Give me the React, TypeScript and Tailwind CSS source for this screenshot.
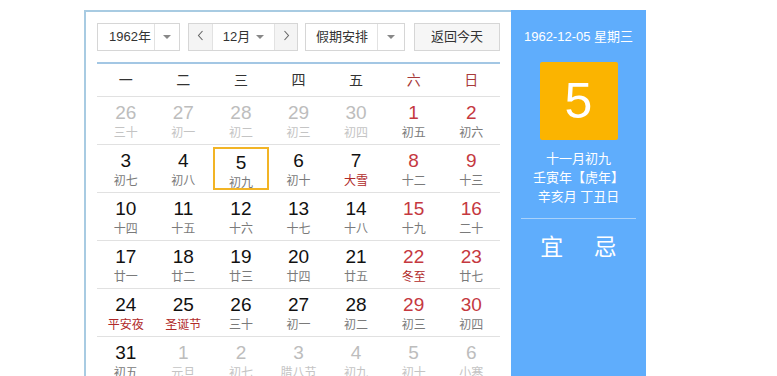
import React from 'react';

type Day = {
  d: number;
  lunar: string;
  other?: boolean;
  fest?: boolean;
};

const rows: Day[][] = [
  [
    { d: 26, lunar: '三十', other: true },
    { d: 27, lunar: '初一', other: true },
    { d: 28, lunar: '初二', other: true },
    { d: 29, lunar: '初三', other: true },
    { d: 30, lunar: '初四', other: true },
    { d: 1, lunar: '初五' },
    { d: 2, lunar: '初六' },
  ],
  [
    { d: 3, lunar: '初七' },
    { d: 4, lunar: '初八' },
    { d: 5, lunar: '初九' },
    { d: 6, lunar: '初十' },
    { d: 7, lunar: '大雪', fest: true },
    { d: 8, lunar: '十二' },
    { d: 9, lunar: '十三' },
  ],
  [
    { d: 10, lunar: '十四' },
    { d: 11, lunar: '十五' },
    { d: 12, lunar: '十六' },
    { d: 13, lunar: '十七' },
    { d: 14, lunar: '十八' },
    { d: 15, lunar: '十九' },
    { d: 16, lunar: '二十' },
  ],
  [
    { d: 17, lunar: '廿一' },
    { d: 18, lunar: '廿二' },
    { d: 19, lunar: '廿三' },
    { d: 20, lunar: '廿四' },
    { d: 21, lunar: '廿五' },
    { d: 22, lunar: '冬至', fest: true },
    { d: 23, lunar: '廿七' },
  ],
  [
    { d: 24, lunar: '平安夜', fest: true },
    { d: 25, lunar: '圣诞节', fest: true },
    { d: 26, lunar: '三十' },
    { d: 27, lunar: '初一' },
    { d: 28, lunar: '初二' },
    { d: 29, lunar: '初三' },
    { d: 30, lunar: '初四' },
  ],
  [
    { d: 31, lunar: '初五' },
    { d: 1, lunar: '元旦', other: true },
    { d: 2, lunar: '初七', other: true },
    { d: 3, lunar: '腊八节', other: true },
    { d: 4, lunar: '初九', other: true },
    { d: 5, lunar: '初十', other: true },
    { d: 6, lunar: '小寒', other: true },
  ],
];

const weekdays = ['一', '二', '三', '四', '五', '六', '日'];

const Caret = () => (
  <span className="w-0 h-0 border-l-[4px] border-r-[4px] border-t-[4px] border-l-transparent border-r-transparent border-t-[#888]" />
);

const Chevron: React.FC<{ dir: 'left' | 'right' }> = ({ dir }) => (
  <svg width="7" height="11" viewBox="0 0 7 11" className="mt-[-3px]">
    <path
      d={dir === 'left' ? 'M5.5 1 L1.5 5.5 L5.5 10' : 'M1.5 1 L5.5 5.5 L1.5 10'}
      fill="none"
      stroke="#666"
      strokeWidth="1.1"
    />
  </svg>
);

const DayCell: React.FC<{ day: Day; col: number; selected: boolean }> = ({ day, col, selected }) => {
  const weekend = col >= 5;
  let numColor = 'text-[#111]';
  let lunarColor = 'text-[#7a7a7a]';
  if (day.other) {
    numColor = 'text-[#bdbdbd]';
    lunarColor = 'text-[#c4c4c4]';
  } else if (weekend) {
    numColor = 'text-[#c5393f]';
  }
  if (day.fest && !day.other) lunarColor = 'text-[#b02a2a]';

  return (
    <div className="h-[48px] border-b border-[#e1e1e1] flex">
      <div
        className={
          'flex-1 flex flex-col items-center justify-start ' +
          (selected ? 'mx-[1px] my-[2px] border-[2.5px] border-[#f2b425] pt-[2.5px]' : 'pt-[5px]')
        }
      >
        <span className={'text-[19px] leading-[22px] ' + numColor} style={{ fontFamily: '"Liberation Sans", Arial, sans-serif' }}>
          {day.d}
        </span>
        <span className={'text-[12px] leading-[16px] mt-[1px] ' + lunarColor}>{day.lunar}</span>
      </div>
    </div>
  );
};

const App: React.FC = () => {
  return (
    <div
      className="w-[777px] h-[376px] overflow-hidden bg-white"
      style={{ fontFamily: '"Liberation Sans", "Noto Sans CJK SC", sans-serif' }}
    >
      <div className="ml-[84px] mt-[10px] flex w-[562px] h-[400px]">
        <div className="w-[427px] border-l-2 border-t-2 border-[#a8cbe2] pl-[11px] pr-[11px] pt-[11px]">
          {/* toolbar */}
          <div className="flex items-center h-[28px] text-[13px] text-[#333]">
            <div className="w-[83px] h-[28px] border border-[#d6d6d6] flex items-center">
              <span className="flex-1 pl-[11px]">1962年</span>
              <span className="w-[25px] h-full border-l border-[#e2e2e2] flex items-center justify-center">
                <Caret />
              </span>
            </div>
            <div className="ml-[8px] w-[110px] h-[28px] border border-[#d6d6d6] flex items-center">
              <span className="w-[24px] h-full bg-[#f4f4f4] border-r border-[#e2e2e2] flex items-center justify-center">
                <Chevron dir="left" />
              </span>
              <span className="flex-1 flex items-center justify-center gap-[6px]">
                12月 <Caret />
              </span>
              <span className="w-[23px] h-full bg-[#f4f4f4] border-l border-[#e2e2e2] flex items-center justify-center">
                <Chevron dir="right" />
              </span>
            </div>
            <div className="ml-[7px] w-[100px] h-[28px] border border-[#d6d6d6] flex items-center">
              <span className="flex-1 pl-[10px]">假期安排</span>
              <span className="w-[27px] h-full border-l border-[#e2e2e2] flex items-center justify-center">
                <Caret />
              </span>
            </div>
            <div className="ml-[9px] w-[86px] h-[28px] border border-[#d6d6d6] bg-[#f6f6f6] flex items-center justify-center">
              返回今天
            </div>
          </div>

          {/* weekday header */}
          <div className="mt-[11px] border-t-2 border-[#a3c7e4] grid grid-cols-7 h-[35px] border-b border-b-[#e1e1e1] text-[14px]">
            {weekdays.map((w, i) => (
              <div key={w} className={'flex items-center justify-center ' + (i >= 5 ? 'text-[#a83a3a]' : 'text-[#333]')}>
                {w}
              </div>
            ))}
          </div>

          {/* days */}
          <div className="grid grid-cols-7">
            {rows.map((row, ri) =>
              row.map((day, ci) => (
                <DayCell key={ri + '-' + ci} day={day} col={ci} selected={ri === 1 && ci === 2} />
              ))
            )}
          </div>
        </div>

        {/* right panel */}
        <div className="w-[135px] bg-[#5fadfc] flex flex-col items-center text-white">
          <div className="mt-[18px] text-[13px] leading-[18px]">1962-12-05 星期三</div>
          <div className="mt-[16px] w-[78px] h-[78px] bg-[#fbb400] rounded-[2px] flex items-center justify-center">
            <span className="text-[50px] leading-none" style={{ fontFamily: '"Liberation Sans", Arial, sans-serif' }}>
              5
            </span>
          </div>
          <div className="mt-[9px] text-[13px] leading-[19px] text-center">
            <div>十一月初九</div>
            <div>壬寅年【虎年】</div>
            <div>辛亥月 丁丑日</div>
          </div>
          <div className="mt-[12px] w-[115px] border-t border-[#a9d2fb]" />
          <div className="mt-[13px] w-full flex justify-around px-[14px] text-[23px] leading-[30px]">
            <span>宜</span>
            <span>忌</span>
          </div>
        </div>
      </div>
    </div>
  );
};

export default App;
